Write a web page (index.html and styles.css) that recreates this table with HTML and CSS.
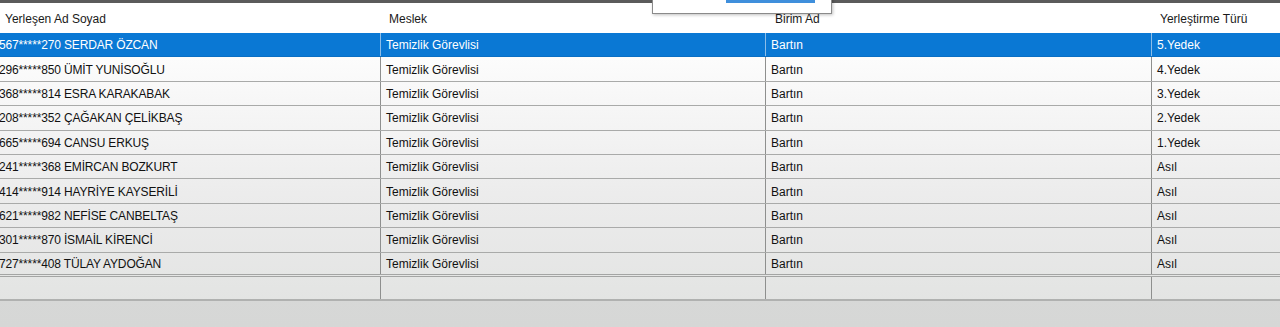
FILE: index.html
```html
<!DOCTYPE html>
<html lang="tr">
<head>
<meta charset="utf-8">
<title>Yerleşen Listesi</title>
<link rel="stylesheet" href="styles.css">
</head>
<body>
<div class="window">
  <div class="topbar"></div>
  <div class="grid">
    <div class="row head">
      <div class="cell c1">Yerleşen Ad Soyad</div>
      <div class="cell c2">Meslek</div>
      <div class="cell c3">Birim Ad</div>
      <div class="cell c4">Yerleştirme Türü</div>
    </div>
    <div class="body">
      <div class="row sel">
        <div class="cell c1 name">567*****270 SERDAR ÖZCAN</div>
        <div class="cell c2">Temizlik Görevlisi</div>
        <div class="cell c3">Bartın</div>
        <div class="cell c4">5.Yedek</div>
      </div>
      <div class="row">
        <div class="cell c1 name">296*****850 ÜMİT YUNİSOĞLU</div>
        <div class="cell c2">Temizlik Görevlisi</div>
        <div class="cell c3">Bartın</div>
        <div class="cell c4">4.Yedek</div>
      </div>
      <div class="row">
        <div class="cell c1 name">368*****814 ESRA KARAKABAK</div>
        <div class="cell c2">Temizlik Görevlisi</div>
        <div class="cell c3">Bartın</div>
        <div class="cell c4">3.Yedek</div>
      </div>
      <div class="row">
        <div class="cell c1 name">208*****352 ÇAĞAKAN ÇELİKBAŞ</div>
        <div class="cell c2">Temizlik Görevlisi</div>
        <div class="cell c3">Bartın</div>
        <div class="cell c4">2.Yedek</div>
      </div>
      <div class="row">
        <div class="cell c1 name">665*****694 CANSU ERKUŞ</div>
        <div class="cell c2">Temizlik Görevlisi</div>
        <div class="cell c3">Bartın</div>
        <div class="cell c4">1.Yedek</div>
      </div>
      <div class="row">
        <div class="cell c1 name">241*****368 EMİRCAN BOZKURT</div>
        <div class="cell c2">Temizlik Görevlisi</div>
        <div class="cell c3">Bartın</div>
        <div class="cell c4">Asıl</div>
      </div>
      <div class="row">
        <div class="cell c1 name">414*****914 HAYRİYE KAYSERİLİ</div>
        <div class="cell c2">Temizlik Görevlisi</div>
        <div class="cell c3">Bartın</div>
        <div class="cell c4">Asıl</div>
      </div>
      <div class="row">
        <div class="cell c1 name">621*****982 NEFİSE CANBELTAŞ</div>
        <div class="cell c2">Temizlik Görevlisi</div>
        <div class="cell c3">Bartın</div>
        <div class="cell c4">Asıl</div>
      </div>
      <div class="row">
        <div class="cell c1 name">301*****870 İSMAİL KİRENCİ</div>
        <div class="cell c2">Temizlik Görevlisi</div>
        <div class="cell c3">Bartın</div>
        <div class="cell c4">Asıl</div>
      </div>
      <div class="row last">
        <div class="cell c1 name">727*****408 TÜLAY AYDOĞAN</div>
        <div class="cell c2">Temizlik Görevlisi</div>
        <div class="cell c3">Bartın</div>
        <div class="cell c4">Asıl</div>
      </div>
      <div class="row empty">
        <div class="cell c1"></div>
        <div class="cell c2"></div>
        <div class="cell c3"></div>
        <div class="cell c4"></div>
      </div>
    </div>
  </div>
  <div class="popup"><div class="popup-bar"></div></div>
</div>
</body>
</html>
```
FILE: styles.css
```css
html, body {
  margin: 0;
  padding: 0;
}
body {
  width: 1280px;
  height: 327px;
  overflow: hidden;
  background: #d9dad9;
  font-family: "Liberation Sans", Arial, sans-serif;
  font-size: 12px;
  color: #111;
}
.window {
  position: relative;
  width: 1280px;
  height: 327px;
  overflow: hidden;
  background: linear-gradient(#e0e1e0, #d6d7d6);
}
.topbar {
  height: 3px;
  background: #5b5b5b;
}
.grid {
  display: flex;
  flex-direction: column;
}
.row {
  display: grid;
  grid-template-columns: 380px 385px 386px 1fr;
  height: 24.4px;
  box-sizing: border-box;
  border-bottom: 1px solid #a9aaa9;
  align-items: stretch;
}
.cell {
  display: flex;
  align-items: center;
  padding-left: 5px;
  padding-top: 1px;
  white-space: nowrap;
  overflow: hidden;
  box-sizing: border-box;
}
.c2, .c3, .c4 {
  border-left: 1px solid #8e8f8e;
}
.c1 {
  padding-left: 0;
}
.name {
  letter-spacing: -0.15px;
  text-indent: -1px;
}
.head {
  height: 30px;
  background: #fff;
  border-bottom: none;
  color: #1a1a1a;
}
.head .cell {
  border-left: none;
  padding-left: 9px;
  padding-top: 1px;
  padding-bottom: 0;
}
.head .c1 {
  padding-left: 5px;
}
.head .c3 {
  padding-left: 10px;
}
.head .c4 {
  padding-left: 9px;
}
.body {
  background: linear-gradient(#ffffff 0%, #f7f7f7 25%, #ececec 60%, #e3e4e3 100%);
}
.row.sel {
  background: #0a78d4;
  color: #fff;
  border-bottom: 1px solid #0a6fc4;
}
.row.sel .c2, .row.sel .c3, .row.sel .c4 {
  border-left-color: #8cbde8;
}
.row.last {
  border-bottom: 3px double #a4a5a4;
}
.row.empty {
  border-bottom: 2px solid #b0b1b0;
}
.popup {
  position: absolute;
  left: 652px;
  top: -4px;
  width: 180px;
  height: 18px;
  box-sizing: border-box;
  background: #fff;
  border: 1px solid #8a8a8a;
  box-shadow: 1px 1px 3px rgba(0, 0, 0, 0.25);
}
.popup-bar {
  position: absolute;
  left: 73px;
  top: 0;
  width: 89px;
  height: 6px;
  background: #3f8fdc;
}
```
